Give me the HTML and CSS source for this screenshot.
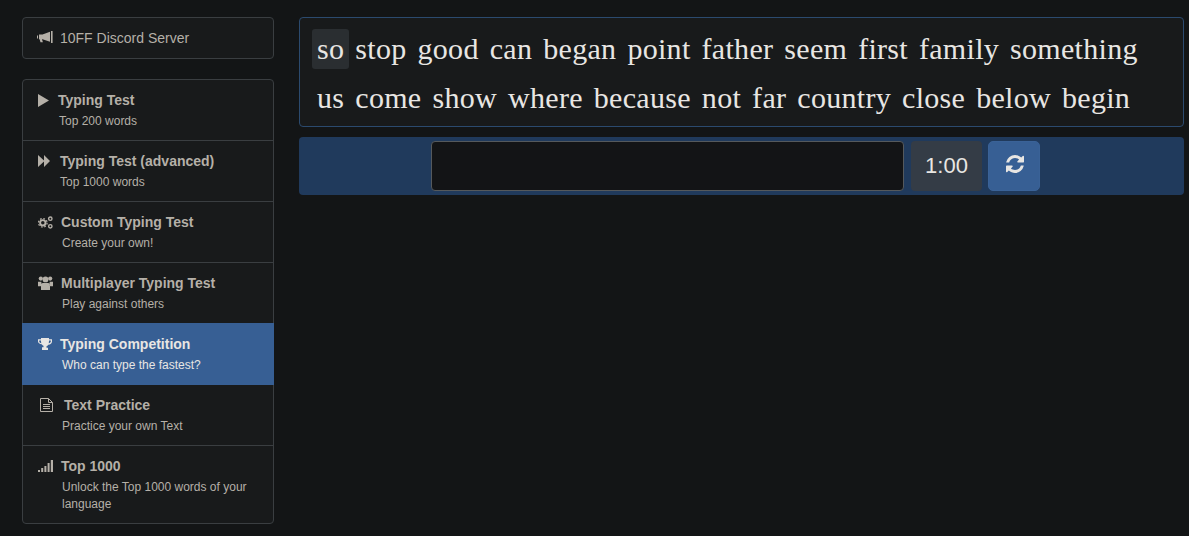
FILE: index.html
```html
<!DOCTYPE html>
<html lang="en">
<head>
    <meta charset="UTF-8">
    <meta name="viewport" content="width=device-width, initial-scale=1.0">
    <title>10FastFingers Typing Competition</title>
    <link rel="stylesheet" href="styles.css">
</head>
<body>
    <div class="page">
        <aside class="sidebar">
            <a class="discord" href="#">
                <svg class="ico ico-horn" viewBox="0 0 16 12"><path d="M0 4.5h1v3H0zM2 3.5h3.5L13 .8v10L5.5 8.2H5l.9 3H3.500l-.9-3H2zM14 0h1.600v12H14z"/></svg>10FF Discord Server
            </a>
            <nav class="nav">
                <a class="nav-item" href="#">
                    <div class="nav-title"><svg class="ico ico-play" viewBox="0 0 11 13"><path d="M0 0l11 6.5L0 13z"/></svg>Typing Test</div>
                    <div class="nav-sub sub-a">Top 200 words</div>
                </a>
                <a class="nav-item" href="#">
                    <div class="nav-title"><svg class="ico ico-forward" viewBox="0 0 12 12"><path d="M0 0l6 5.500V0l6 6-6 6V6.500L0 12z"/></svg>Typing Test (advanced)</div>
                    <div class="nav-sub sub-b">Top 1000 words</div>
                </a>
                <a class="nav-item" href="#">
                    <div class="nav-title"><svg class="ico ico-cogs" viewBox="0 0 15 13"><circle cx="4.800" cy="6.800" r="2.700" fill="none" stroke="currentColor" stroke-width="1.900"/><circle cx="4.800" cy="6.800" r="4.300" fill="none" stroke="currentColor" stroke-width="1.200" stroke-dasharray="1.700 1.680"/><circle cx="12.300" cy="2.700" r="1.700" fill="none" stroke="currentColor" stroke-width="1.400"/><circle cx="12.300" cy="10.300" r="1.700" fill="none" stroke="currentColor" stroke-width="1.400"/></svg>Custom Typing Test</div>
                    <div class="nav-sub">Create your own!</div>
                </a>
                <a class="nav-item" href="#">
                    <div class="nav-title"><svg class="ico ico-users" viewBox="0 0 15 14"><circle cx="2.800" cy="2.600" r="2.100"/><circle cx="12.200" cy="2.600" r="2.100"/><circle cx="7.500" cy="3.400" r="2.900"/><path d="M0 5.800h3.200l.6 2.400-1 2H0zM15 5.800h-3.200l-.6 2.400 1 2H15zM4.400 7h6.200l1.400 2.400V14H3V9.400z"/></svg>Multiplayer Typing Test</div>
                    <div class="nav-sub">Play against others</div>
                </a>
                <a class="nav-item active" href="#">
                    <div class="nav-title"><svg class="ico ico-trophy" viewBox="0 0 14 12"><path fill-rule="evenodd" d="M3 0h8v1.200h3v2.200c0 1.800-1.600 3.100-3.700 3.400-.5.7-1.100 1.200-1.800 1.500v1.500h1.500V12h-6V9.300h1.500V7.800c-.7-.3-1.300-.8-1.800-1.500C1.600 6 0 4.700 0 3.400V1.200h3zM1.200 2.400v1c0 .8.800 1.500 2.100 1.900-.2-.8-.3-1.800-.3-2.900zm11.600 0H11c0 1.100-.1 2.100-.3 2.900 1.300-.4 2.100-1.100 2.100-1.900z"/></svg>Typing Competition</div>
                    <div class="nav-sub">Who can type the fastest?</div>
                </a>
                <a class="nav-item" href="#">
                    <div class="nav-title"><svg class="ico ico-file" viewBox="0 0 13 14"><path fill="none" stroke="currentColor" d="M.5.5h8l4 4v9H.5zM8.500.5v4h4M3 6.500h7M3 8.500h7M3 10.500h7"/></svg>Text Practice</div>
                    <div class="nav-sub">Practice your own Text</div>
                </a>
                <a class="nav-item" href="#">
                    <div class="nav-title"><svg class="ico ico-signal" viewBox="0 0 15 12"><path d="M0 10h2v2H0zM3.200 8h2v4h-2zM6.400 6h2v6h-2zM9.600 3h2v9h-2zM12.800 0H15v12h-2.200z"/></svg>Top 1000</div>
                    <div class="nav-sub">Unlock the Top 1000 words of your language</div>
                </a>
            </nav>
        </aside>
        <main class="main">
            <div class="words">
                <span class="word current">so</span>
                <span class="word">stop</span>
                <span class="word">good</span>
                <span class="word">can</span>
                <span class="word">began</span>
                <span class="word">point</span>
                <span class="word">father</span>
                <span class="word">seem</span>
                <span class="word">first</span>
                <span class="word">family</span>
                <span class="word">something</span>
                <span class="word">us</span>
                <span class="word">come</span>
                <span class="word">show</span>
                <span class="word">where</span>
                <span class="word">because</span>
                <span class="word">not</span>
                <span class="word">far</span>
                <span class="word">country</span>
                <span class="word">close</span>
                <span class="word">below</span>
                <span class="word">begin</span>
            </div>
            <div class="controls">
                <input class="type-input" type="text">
                <div class="timer">1:00</div>
                <button class="reload" type="button">
                    <svg class="ico-reload" viewBox="0 0 1536 1536"><path d="M1511 928q0 5-1 7-64 268-268 434.500t-478 166.500q-146 0-282.500-55t-243.500-157l-129 129q-19 19-45 19t-45-19-19-45v-448q0-26 19-45t45-19h448q26 0 45 19t19 45-19 45l-137 137q71 66 161 102t187 36q134 0 250-65t186-179q11-17 53-117 8-23 30-23h192q13 0 22.500 9.500t9.500 22.500zm25-800v448q0 26-19 45t-45 19h-448q-26 0-45-19t-19-45 19-45l138-138q-148-137-349-137-134 0-250 65t-186 179q-11 17-53 117-8 23-30 23h-199q-13 0-22.500-9.500t-9.500-22.500v-7q65-268 270-434.500t480-166.500q146 0 284 55.500t245 156.500l130-129q19-19 45-19t45 19 19 45z"/></svg>
                </button>
            </div>
        </main>
    </div>
</body>
</html>
```

FILE: styles.css
```css
body {
    margin: 0;
    background-color: #131516;
    font-family: "Liberation Sans", Arial, sans-serif;
    color: #b5b0a8;
}
a {
    color: inherit;
    text-decoration: none;
}
.page {
    display: flex;
    align-items: flex-start;
    padding: 17px 5px 12px 22px;
    gap: 25px;
}
.sidebar {
    width: 252px;
    flex-shrink: 0;
}
.discord {
    display: flex;
    align-items: center;
    height: 40px;
    padding-left: 14px;
    margin-bottom: 20px;
    background: #181a1b;
    border: 1px solid #3a3e41;
    border-radius: 4px;
    font-size: 14px;
}
.ico {
    fill: currentColor;
    flex-shrink: 0;
}
.ico-horn {
    width: 16px;
    height: 12px;
    margin-right: 7px;
    margin-top: -2px;
}
.nav {
    background: #181a1b;
    border: 1px solid #3a3e41;
    border-radius: 4px;
}
.nav-item {
    display: block;
    padding: 10px 15px;
    border-bottom: 1px solid #3a3e41;
}
.nav-item:last-child {
    border-bottom: none;
}
.nav-item.active {
    margin: -1px -1px 0;
    padding: 11px 16px 10px;
    background: #375f94;
    border-bottom: 1px solid #375f94;
    color: #e8e6e3;
}
.nav-title {
    display: flex;
    align-items: center;
    height: 20px;
    font-size: 14px;
    font-weight: bold;
}
.nav-sub {
    margin-top: 3px;
    margin-left: 24px;
    font-size: 12px;
    line-height: 17px;
}
.sub-a {
    margin-left: 21px;
}
.sub-b {
    margin-left: 22px;
}
.ico-play {
    width: 11px;
    height: 13px;
    margin-right: 9px;
}
.ico-forward {
    width: 12px;
    height: 12px;
    margin-right: 10px;
}
.ico-cogs {
    width: 15px;
    height: 13px;
    margin-right: 8px;
}
.ico-users {
    width: 15px;
    height: 14px;
    margin-right: 8px;
}
.ico-trophy {
    width: 14px;
    height: 12px;
    margin-right: 8px;
}
.ico-file {
    width: 13px;
    height: 14px;
    margin-left: 2px;
    margin-right: 11px;
}
.ico-signal {
    width: 15px;
    height: 12px;
    margin-right: 8px;
}
.main {
    flex: 1;
    min-width: 0;
}
.words {
    display: flex;
    flex-wrap: wrap;
    gap: 9px 1px;
    padding: 11px 12px 8px;
    background: #181a1b;
    border: 1px solid #2b4a6e;
    border-radius: 4px;
    font-family: "Liberation Serif", "Times New Roman", serif;
    font-size: 30px;
    letter-spacing: 0.3px;
    line-height: 40px;
    color: #e8e6e3;
}
.word {
    padding: 0 5px;
    border-radius: 3px;
}
.word.current {
    background: #2a2e31;
}
.controls {
    display: flex;
    gap: 6px;
    margin-top: 10px;
    padding: 4px 0 4px 132px;
    background: #203a5c;
    border-radius: 4px;
}
.type-input {
    box-sizing: border-box;
    width: 473px;
    height: 50px;
    margin-right: 1px;
    background: #131416;
    border: 1px solid #55595c;
    border-radius: 4px;
}
.timer {
    width: 71px;
    height: 50px;
    background: #343c46;
    border-radius: 4px;
    font-size: 22px;
    line-height: 50px;
    text-align: center;
    color: #e8e6e3;
}
.reload {
    width: 52px;
    height: 50px;
    padding: 0 0 4px 2px;
    background: #375f94;
    border: 1px solid #3a6297;
    border-radius: 5px;
    color: #e8e6e3;
}
.ico-reload {
    width: 18px;
    height: 18px;
    fill: currentColor;
    vertical-align: middle;
}
```
